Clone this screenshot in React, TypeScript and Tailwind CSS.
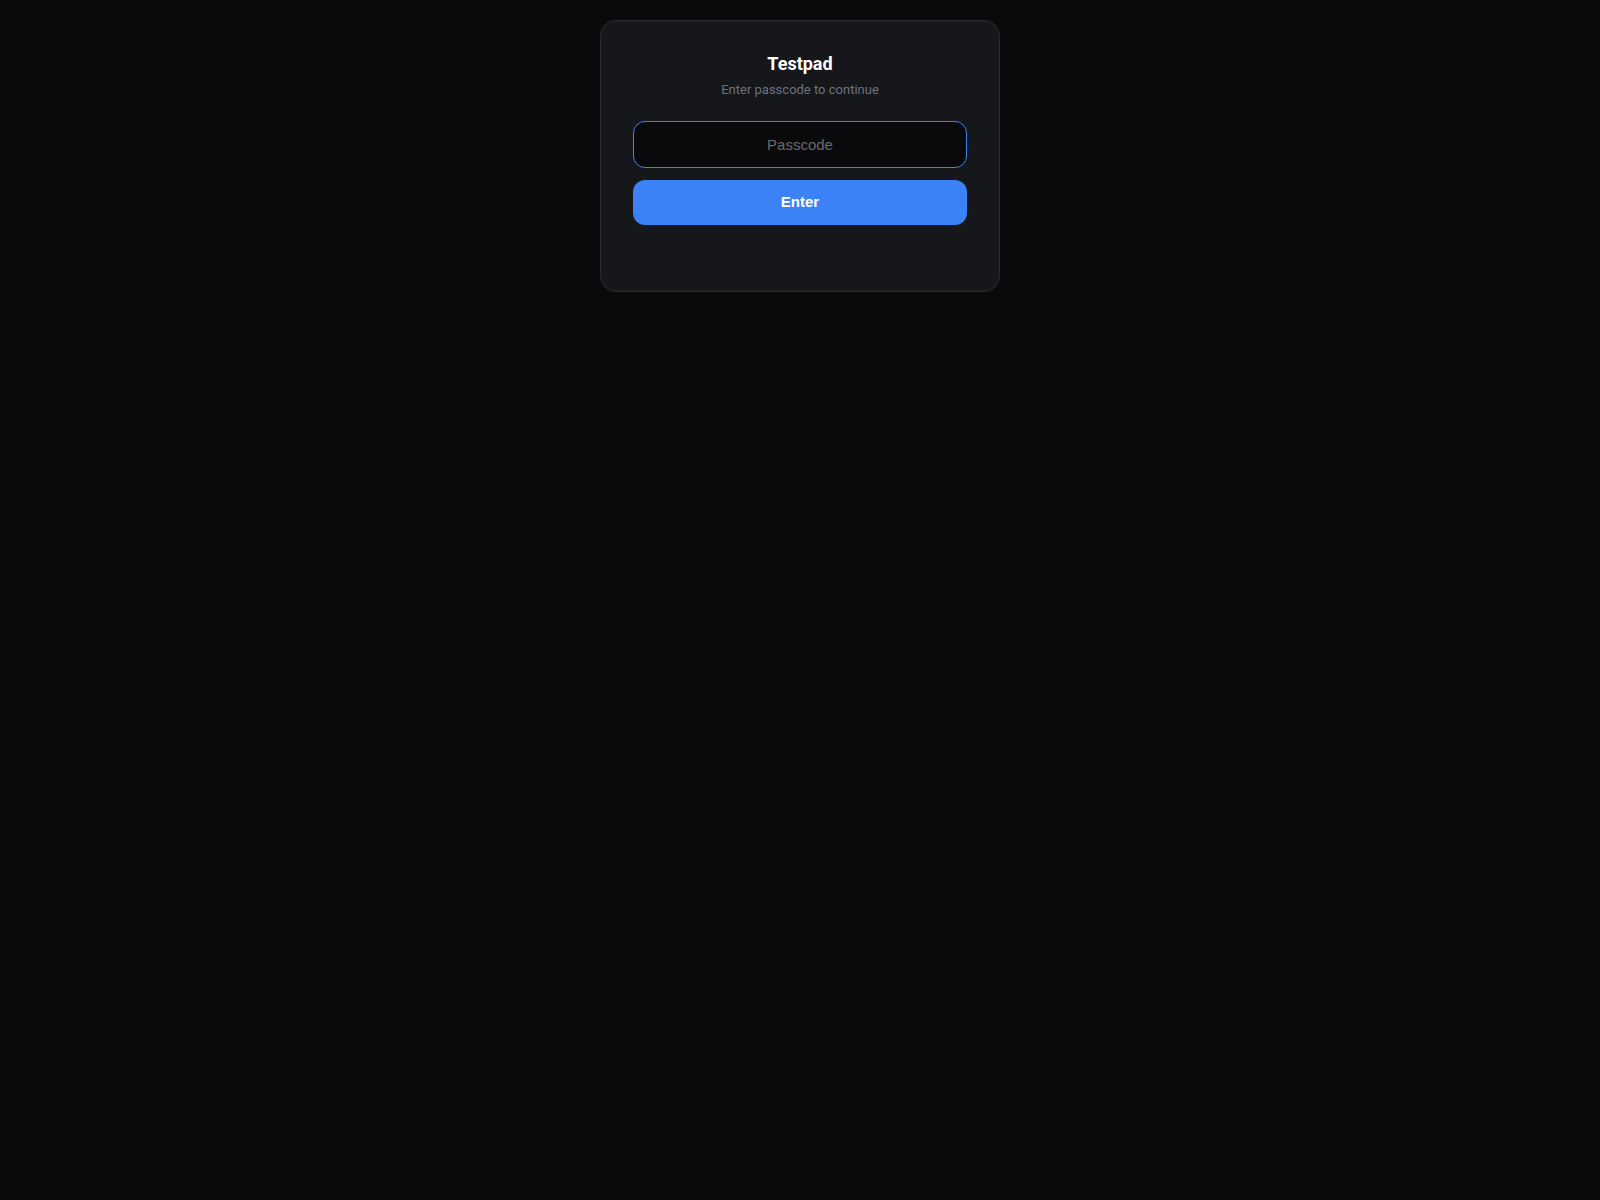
export default function App() {
  return (
    <div className="min-h-screen bg-[#090a0c] flex justify-center items-start pt-5">
      <div className="w-[400px] rounded-2xl border border-[#2a2c32] bg-[#16171b] px-8 pt-[29px] pb-[66px] flex flex-col items-center">
        <h1 className="text-lg leading-7 font-bold text-white font-['Roboto',sans-serif]">
          Testpad
        </h1>
        <p className="mt-1 text-[13px] leading-4 text-[#6b7280] font-['Roboto',sans-serif]">
          Enter passcode to continue
        </p>
        <input
          type="password"
          autoFocus
          placeholder="Passcode"
          className="mt-[23px] w-full h-[47px] rounded-xl border border-[#3b82f6] bg-[#0a0a0c] text-center text-[15px] text-white placeholder:text-[#6b6b6b] font-['Liberation_Sans',Arial,sans-serif] outline-none caret-white"
        />
        <button className="mt-3 w-full h-[45px] rounded-xl bg-[#3b82f6] text-white text-[15px] font-bold font-['Liberation_Sans',Arial,sans-serif]">
          Enter
        </button>
      </div>
    </div>
  );
}
